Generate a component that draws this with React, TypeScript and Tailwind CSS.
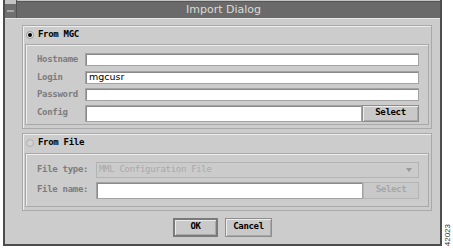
import React from "react";

const mono = "font-['DejaVu_Sans_Mono',monospace] font-bold text-[9px] tracking-[-0.3px]";

function Field({ value = "", className = "" }: { value?: string; className?: string }) {
  return (
    <div
      className={`bg-white border border-[#a3a3a3] shadow-[inset_1px_1px_0_#8a8a8a] flex items-center pl-[3px] text-[9.5px] text-black font-['DejaVu_Sans',sans-serif] ${className}`}
    >
      {value}
    </div>
  );
}

function Btn({ label, disabled = false, className = "" }: { label: string; disabled?: boolean; className?: string }) {
  return (
    <div
      className={`flex items-center justify-center border ${
        disabled
          ? "border-[#b4b4b4] text-[#a6a6a6]"
          : "border-[#8e8e8e] text-black shadow-[inset_1px_1px_0_#ececec,inset_-1px_-1px_0_#a8a8a8]"
      } bg-[#c9c9c9] ${mono} ${className}`}
    >
      {label}
    </div>
  );
}

function Radio({ checked }: { checked: boolean }) {
  return (
    <div
      className={`w-[8px] h-[8px] rounded-full flex items-center justify-center ${
        checked ? "bg-[#e8e8e8] border border-[#9a9a9a]" : "border border-[#b0b0b0] bg-[#d2d2d2]"
      }`}
    >
      {checked && <div className="w-[4px] h-[4px] rounded-full bg-black" />}
    </div>
  );
}

function Group({ title, checked, headerH, children }: { title: string; checked: boolean; headerH: string; children: React.ReactNode }) {
  return (
    <div className="border border-[#a9a9a9] shadow-[inset_1px_1px_0_#ededed] px-[2px] pb-[3px]">
      <div className={`flex items-center gap-[4px] pl-[1px] ${headerH}`}>
        <Radio checked={checked} />
        <span className={`${mono} text-black`}>{title}</span>
      </div>
      <div className="border border-[#a9a9a9] shadow-[inset_1px_1px_0_#ededed] pl-[11px] pr-[9px]">{children}</div>
    </div>
  );
}

export default function App() {
  return (
    <div className="w-[453px] h-[248px] bg-white flex pl-[3px] overflow-hidden">
      <div className="w-[439px] h-[246px] border-x-2 border-b-2 border-[#4d4d4d] bg-[#cccccc] flex flex-col">
        {/* window decoration */}
        <div className="flex h-[18px]">
          <div className="w-[12px] border-r border-[#555] flex flex-col">
            <div className="h-[4px] bg-[#c4c4c4]" />
            <div className="flex-1 bg-[#6f6f6f] flex items-center justify-center">
              <div className="w-[7px] h-[2px] bg-[#a8a8a8]" />
            </div>
          </div>
          <div className="flex-1 flex flex-col">
            <div className="h-[4px] bg-[#c4c4c4] border-b border-[#555]" />
            <div className="flex-1 bg-[#6a6a6a] flex items-center justify-center text-[11px] text-[#dadada] font-['DejaVu_Sans',sans-serif] pr-[10px]">
              Import Dialog
            </div>
          </div>
        </div>
        <div className="h-[1px] bg-[#e6e6e6]" />

        <div className="flex-1 pl-[17px] pr-[8px] pt-[6px] flex flex-col">
          <Group title="From MGC" checked headerH="h-[18px]">
            <div className="pt-[8px] pb-[2px] flex flex-col">
              {[
                ["Hostname", ""],
                ["Login", "mgcusr"],
                ["Password", ""],
              ].map(([l, v], i) => (
                <div key={l} className={`flex items-center ${i === 0 ? "" : "mt-[4px]"}`}>
                  <span className={`${mono} text-[#7c7c7c] w-[48px]`}>{l}</span>
                  <Field value={v} className="flex-1 h-[13px]" />
                </div>
              ))}
              <div className="flex items-center mt-[3px]">
                <span className={`${mono} text-[#7c7c7c] w-[48px]`}>Config</span>
                <Field className="flex-1 h-[17px]" />
                <Btn label="Select" className="w-[57px] h-[17px]" />
              </div>
            </div>
          </Group>

          <div className="h-[4px]" />

          <Group title="From File" checked={false} headerH="h-[19px]">
            <div className="pt-[8px] pb-[7px] flex flex-col">
              <div className="flex items-center">
                <span className={`${mono} text-[#7c7c7c] w-[59px]`}>File type:</span>
                <div className={`flex-1 h-[16px] border border-[#b3b3b3] bg-[#cbcbcb] flex items-center justify-between pl-[2px] pr-[6px] ${mono} text-[#a9a9a9] font-normal`}>
                  <span>MML Configuration File</span>
                  <svg width="6" height="4" viewBox="0 0 6 4">
                    <path d="M0 0 L6 0 L3 4 Z" fill="#9a9a9a" />
                  </svg>
                </div>
              </div>
              <div className="flex items-center mt-[4px]">
                <span className={`${mono} text-[#7c7c7c] w-[59px]`}>File name:</span>
                <Field className="flex-1 h-[17px]" />
                <Btn label="Select" disabled className="w-[56px] h-[17px]" />
              </div>
            </div>
          </Group>

          <div className="flex justify-center gap-[7px] mt-[7px] pr-[9px]">
            <Btn label="OK" className="w-[45px] h-[19px] !border-2 !border-[#7a7a7a]" />
            <Btn label="Cancel" className="w-[47px] h-[19px]" />
          </div>
        </div>
      </div>
      <div className="flex-1 flex items-end justify-center pb-[2px]">
        <span className="[writing-mode:vertical-rl] rotate-180 text-[8px] leading-none text-[#333] font-['Liberation_Sans',sans-serif]">
          42023
        </span>
      </div>
    </div>
  );
}
